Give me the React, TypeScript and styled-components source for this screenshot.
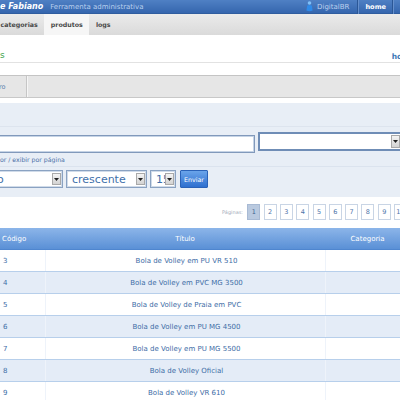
import styled, { createGlobalStyle } from "styled-components";

const GlobalStyle = createGlobalStyle`
    html, body {
        margin: 0;
        padding: 0;
        background: #ffffff;
        overflow: hidden;
    }
    body {
        font-family: "DejaVu Sans", Verdana, sans-serif;
    }
`;

const produtos = [
    { id: 3, titulo: "Bola de Volley em PU VR 510" },
    { id: 4, titulo: "Bola de Volley em PVC MG 3500" },
    { id: 5, titulo: "Bola de Volley de Praia em PVC" },
    { id: 6, titulo: "Bola de Volley em PU MG 4500" },
    { id: 7, titulo: "Bola de Volley em PU MG 5500" },
    { id: 8, titulo: "Bola de Volley Oficial" },
    { id: 9, titulo: "Bola de Volley VR 610" },
];

const paginas = [1, 2, 3, 4, 5, 6, 7, 8, 9, 10];

const UserIcon = () => (
    <svg width="7" height="11" viewBox="0 0 7 11">
        <circle cx="3.5" cy="2" r="1.8" fill="#7fc0f8" />
        <path d="M1.2 4.5 Q3.5 3.6 5.8 4.5 L6.6 9.4 Q3.5 11 0.4 9.4 Z" fill="#2f8ae8" />
    </svg>
);

const Arrow = () => (
    <ArrowBox>
        <svg width="5" height="3" viewBox="0 0 5 3">
            <path d="M0 0 H5 L2.5 3 Z" fill="#222" />
        </svg>
    </ArrowBox>
);

const App = () => {
    return (
        <Viewport>
            <GlobalStyle />
            <TopBar>
                <Brand>e Fabiano</Brand>
                <Subtitle>Ferramenta administrativa</Subtitle>
                <UserArea>
                    <UserIcon />
                    <UserName>DigitalBR</UserName>
                </UserArea>
                <NavSep />
                <NavLink>home</NavLink>
                <NavSep />
            </TopBar>
            <TabBar>
                <Tab>categorias</Tab>
                <Tab active>produtos</Tab>
                <Tab>logs</Tab>
            </TabBar>
            <TitleRow>
                <PageTitle>s</PageTitle>
                <HomeLink>hom</HomeLink>
            </TitleRow>
            <SubBar>
                <SubItem>ro</SubItem>
            </SubBar>
            <FilterPanel>
                <FilterTop />
                <SearchRow>
                    <SearchInput />
                    <WideSelect>
                        <Arrow />
                    </WideSelect>
                </SearchRow>
                <Hint>or / exibir por página</Hint>
                <OrderRow>
                    <Select w={72}>
                        <SelectText>o</SelectText>
                        <Arrow />
                    </Select>
                    <Select w={81}>
                        <SelectText>crescente</SelectText>
                        <Arrow />
                    </Select>
                    <Select w={26}>
                        <SelectText>15</SelectText>
                        <Arrow />
                    </Select>
                    <SendButton>Enviar</SendButton>
                </OrderRow>
            </FilterPanel>
            <Pager>
                <PagerLabel>Páginas:</PagerLabel>
                {paginas.map((p) => (
                    <PageBox key={p} active={p === 1}>
                        {p}
                    </PageBox>
                ))}
            </Pager>
            <Table>
                <colgroup>
                    <col style={{ width: 45 }} />
                    <col style={{ width: 280 }} />
                    <col style={{ width: 85 }} />
                </colgroup>
                <thead>
                    <tr>
                        <Th align="left">Código</Th>
                        <Th>Título</Th>
                        <Th>Categoria</Th>
                    </tr>
                </thead>
                <tbody>
                    {produtos.map((p, i) => (
                        <Row key={p.id} alt={i % 2 === 1}>
                            <Td align="left">{p.id}</Td>
                            <Td>{p.titulo}</Td>
                            <Td></Td>
                        </Row>
                    ))}
                </tbody>
            </Table>
        </Viewport>
    );
};

const Viewport = styled.div`
    width: 400px;
    height: 400px;
    overflow: hidden;
    background: #fff;
`;

const TopBar = styled.div`
    height: 14px;
    display: flex;
    align-items: center;
    padding-right: 6px;
    background: linear-gradient(#4f80c4, #3566ae);
    border-bottom: 1px solid #2f5d9f;
    box-sizing: border-box;
    white-space: nowrap;
`;

const Brand = styled.span`
    color: #fff;
    font-size: 8px;
    font-weight: bold;
    font-style: italic;
`;

const Subtitle = styled.span`
    color: #b9cfee;
    font-size: 7px;
    margin-left: 7px;
`;

const UserArea = styled.div`
    margin-left: auto;
    display: flex;
    align-items: center;
    gap: 4px;
    margin-right: 8px;
`;

const UserName = styled.span`
    color: #bcd0ee;
    font-size: 7px;
`;

const NavSep = styled.span`
    width: 1px;
    height: 14px;
    background: #2b5796;
    border-right: 1px solid #6690cc;
`;

const NavLink = styled.span`
    color: #fff;
    font-size: 6.6px;
    font-weight: bold;
    padding: 0 6px;
`;

const TabBar = styled.div`
    height: 21px;
    display: flex;
    margin-left: -6px;
    background: linear-gradient(#ebebeb, #dadada);
`;

const Tab = styled.div<{ active?: boolean }>`
    display: flex;
    align-items: center;
    padding: 0 6.5px;
    font-size: 6.3px;
    font-weight: bold;
    color: #4a4a4a;
    background: ${({ active }) => (active ? "#f6f6f6" : "transparent")};
`;

const TitleRow = styled.div`
    height: 28px;
    display: flex;
    align-items: flex-end;
    justify-content: space-between;
    box-sizing: border-box;
    border-bottom: 1px solid #e2e2e2;
`;

const PageTitle = styled.span`
    color: #3ca24a;
    font-size: 9px;
    line-height: 9px;
    margin-bottom: 2px;
`;

const HomeLink = styled.span`
    color: #3c78b6;
    font-size: 7.5px;
    font-weight: bold;
    line-height: 9px;
    margin-bottom: 1px;
    margin-right: -10px;
`;

const SubBar = styled.div`
    height: 23px;
    margin-top: 12px;
    display: flex;
    box-sizing: border-box;
    background: #e6e6e6;
    border-top: 1px solid #c4c4c4;
    border-bottom: 1px solid #c8c8c8;
`;

const SubItem = styled.div`
    width: 28px;
    box-sizing: border-box;
    display: flex;
    align-items: center;
    font-size: 6.5px;
    color: #5f83ad;
    margin-left: -1px;
    border-right: 1px solid #c6c6c6;
    box-shadow: 1px 0 0 #f6f6f6;
`;

const FilterPanel = styled.div`
    margin-top: 5px;
    height: 94px;
    background: #e8eef6;
    display: flex;
    flex-direction: column;
`;

const FilterTop = styled.div`
    height: 23px;
    border-bottom: 1px solid #dde4ee;
    flex-shrink: 0;
`;

const SearchRow = styled.div`
    display: flex;
    align-items: flex-start;
    gap: 3px;
    margin-top: 5px;
    margin-left: -10px;
`;

const SearchInput = styled.div`
    width: 265px;
    height: 18px;
    flex-shrink: 0;
    box-sizing: border-box;
    margin-top: 3px;
    background: #fff;
    border: 1px solid #8199bb;
    box-shadow: inset 0 0 0 1px #c6d4e6;
`;

const WideSelect = styled.div`
    width: 144px;
    height: 19px;
    flex-shrink: 0;
    box-sizing: border-box;
    background: #fff;
    border: 2px solid #6f8db6;
    display: flex;
    justify-content: flex-end;
    align-items: stretch;
    padding: 1px 0 1px 1px;
`;

const ArrowBox = styled.div`
    width: 9px;
    box-sizing: border-box;
    display: flex;
    align-items: center;
    justify-content: center;
    background: linear-gradient(#f4f4f4, #d2d2d2);
    border: 1px solid #a9a9a9;
`;

const Hint = styled.div`
    font-size: 6.2px;
    color: #4a6fa6;
    margin-top: 3px;
    padding-bottom: 3px;
    border-bottom: 1px solid #dbe3ee;
`;

const OrderRow = styled.div`
    display: flex;
    align-items: center;
    margin-top: 3px;
    margin-left: -9px;
`;

const Select = styled.div<{ w: number }>`
    width: ${({ w }) => w}px;
    height: 18px;
    flex-shrink: 0;
    box-sizing: border-box;
    margin-right: 3px;
    background: #fff;
    border: 1px solid #8aa2c2;
    box-shadow: inset 0 0 0 1px #d0dbe9;
    display: flex;
    align-items: stretch;
    padding: 2px 1px 2px 3px;
    overflow: hidden;
`;

const SelectText = styled.span`
    flex: 1;
    min-width: 0;
    overflow: hidden;
    white-space: nowrap;
    font-size: 11px;
    line-height: 13px;
    color: #3f70aa;
    padding-left: 2px;
`;

const SendButton = styled.button`
    width: 28px;
    height: 18px;
    margin-left: 1px;
    padding: 0;
    border: 1px solid #2a62b8;
    border-radius: 1px;
    background: linear-gradient(#6aa4ea, #2e6fcf);
    color: #fff;
    font-family: "DejaVu Sans", Verdana, sans-serif;
    font-size: 6.3px;
`;

const Pager = styled.div`
    height: 30px;
    display: flex;
    align-items: center;
    justify-content: flex-end;
    gap: 3.3px;
    margin-right: -7px;
`;

const PagerLabel = styled.span`
    font-size: 5px;
    color: #a3abb9;
    margin-right: 1px;
`;

const PageBox = styled.span<{ active?: boolean }>`
    width: 13px;
    height: 16px;
    box-sizing: border-box;
    display: flex;
    align-items: center;
    justify-content: center;
    font-size: 6.5px;
    color: ${({ active }) => (active ? "#42638f" : "#4e74a8")};
    background: ${({ active }) => (active ? "#b9c9df" : "#fff")};
    border: 1px solid ${({ active }) => (active ? "#a8bad4" : "#c9d5e5")};
`;

const Table = styled.table`
    width: 410px;
    table-layout: fixed;
    border-collapse: collapse;
    margin-top: 1px;
`;

const Th = styled.th<{ align?: string }>`
    height: 21px;
    padding: 0 2px;
    text-align: ${({ align }) => align || "center"};
    font-size: 7px;
    font-weight: normal;
    color: #fff;
    background: linear-gradient(#8cb5e9, #5a90d6);
    border-bottom: 1px solid #4f86cf;
`;

const Row = styled.tr<{ alt?: boolean }>`
    background: ${({ alt }) => (alt ? "#e4ecf7" : "#ffffff")};
`;

const Td = styled.td<{ align?: string }>`
    height: 21px;
    padding: 0 0 0 3px;
    text-align: ${({ align }) => align || "center"};
    font-size: 7px;
    color: #3d6ca6;
    border-bottom: 1px solid #b7cfeb;
    border-right: 1px solid #eef3fa;
    white-space: nowrap;
`;

export default App;
